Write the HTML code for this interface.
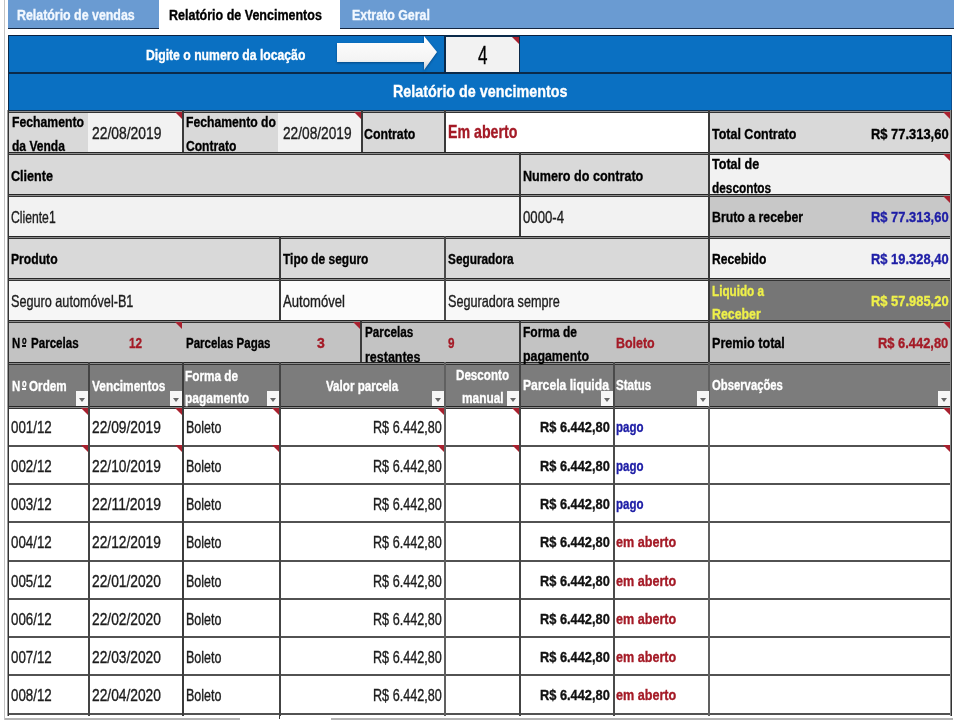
<!DOCTYPE html>
<html><head><meta charset="utf-8"><style>
html,body{margin:0;padding:0;background:#fff;width:960px;height:720px;overflow:hidden;position:relative}
body>div,body>svg{position:absolute}
.t{font-family:"Liberation Sans",sans-serif;line-height:1;white-space:nowrap;transform-origin:0 0;-webkit-text-stroke:0.35px currentColor}
</style></head><body>
<div style="left:4px;top:0px;width:1px;height:720px;background:#c4c4c4;"></div>
<div style="left:8px;top:0px;width:946px;height:28px;background:#6a9bd2;"></div>
<div style="left:8px;top:28px;width:946px;height:1px;background:#142640;"></div>
<div style="left:159px;top:0px;width:181px;height:29px;background:#ffffff;"></div>
<div class="t" style="left:17.00px;top:7.28px;font-size:15.26px;font-weight:bold;color:#f2f8ff;transform:scaleX(0.8122)">Relatório de vendas</div>
<div class="t" style="left:169.40px;top:7.38px;font-size:15.26px;font-weight:bold;color:#000;transform:scaleX(0.8200)">Relatório de Vencimentos</div>
<div class="t" style="left:351.60px;top:7.38px;font-size:15.26px;font-weight:bold;color:#f2f8ff;transform:scaleX(0.8138)">Extrato Geral</div>
<div style="left:8px;top:35px;width:944px;height:75px;background:#0a70c2;"></div>
<div style="left:8px;top:35px;width:944px;height:1px;background:#0b2140;"></div>
<div style="left:8px;top:72px;width:944px;height:2px;background:#0b2a4a;"></div>
<div style="left:951px;top:35px;width:1px;height:75px;background:#0c4f8f;"></div>
<div class="t" style="left:145.60px;top:46.53px;font-size:15.55px;font-weight:bold;color:#fff;transform:scaleX(0.7849)">Digite o numero da locação</div>
<svg style="position:absolute;left:330px;top:30px" width="120" height="50" viewBox="330 30 120 50"><defs><linearGradient id="ag" x1="0" y1="0" x2="0" y2="1"><stop offset="0" stop-color="#ffffff"/><stop offset="0.7" stop-color="#f4f4f4"/><stop offset="1" stop-color="#c8ccd4"/></linearGradient></defs><path d="M337 43 L424 43 L424 36 L437 52 L424 70 L424 62 L337 62 Z" fill="url(#ag)" style="filter:drop-shadow(0 1.5px 1px rgba(0,20,50,0.45))"/></svg>
<div style="left:444px;top:35px;width:76px;height:39px;background:#0b2a4a;"></div>
<div style="left:446px;top:37px;width:73px;height:35px;background:#f2f2f2;"></div>
<div class="t" style="left:477.50px;top:42.98px;font-size:25.29px;font-weight:normal;color:#000;transform:scaleX(0.6756)">4</div>
<div style="left:512px;top:37px;width:0;height:0;border-top:7px solid #a8202e;border-left:7px solid transparent;background:transparent"></div>
<div class="t" style="left:392.90px;top:83.25px;font-size:17.30px;font-weight:bold;color:#fff;transform:scaleX(0.8295)">Relatório de vencimentos</div>
<div style="left:8px;top:113px;width:80px;height:39px;background:#d9d9d9;"></div>
<div style="left:88px;top:113px;width:94px;height:39px;background:#f2f2f2;"></div>
<div style="left:182px;top:113px;width:96px;height:39px;background:#d9d9d9;"></div>
<div style="left:278px;top:113px;width:83px;height:39px;background:#f2f2f2;"></div>
<div style="left:361px;top:113px;width:83px;height:39px;background:#d9d9d9;"></div>
<div style="left:444px;top:113px;width:265px;height:39px;background:#ffffff;"></div>
<div style="left:709px;top:113px;width:243px;height:39px;background:#d9d9d9;"></div>
<div style="left:8px;top:152px;width:511px;height:42px;background:#d9d9d9;"></div>
<div style="left:519px;top:152px;width:190px;height:42px;background:#d9d9d9;"></div>
<div style="left:709px;top:152px;width:243px;height:42px;background:#f2f2f2;"></div>
<div style="left:8px;top:194px;width:511px;height:42px;background:#f2f2f2;"></div>
<div style="left:519px;top:194px;width:190px;height:42px;background:#f2f2f2;"></div>
<div style="left:709px;top:194px;width:243px;height:42px;background:#c8c8c8;"></div>
<div style="left:8px;top:236px;width:271px;height:42px;background:#d9d9d9;"></div>
<div style="left:279px;top:236px;width:165px;height:42px;background:#d9d9d9;"></div>
<div style="left:444px;top:236px;width:265px;height:42px;background:#d9d9d9;"></div>
<div style="left:709px;top:236px;width:243px;height:42px;background:#f2f2f2;"></div>
<div style="left:8px;top:278px;width:271px;height:42px;background:#f6f6f6;"></div>
<div style="left:279px;top:278px;width:165px;height:42px;background:#fbfbfb;"></div>
<div style="left:444px;top:278px;width:265px;height:42px;background:#f8f8f8;"></div>
<div style="left:709px;top:278px;width:243px;height:42px;background:#767676;"></div>
<div style="left:8px;top:320px;width:944px;height:42px;background:#c3c3c3;"></div>
<div style="left:8px;top:362px;width:944px;height:44px;background:#7c7c7c;"></div>
<div style="left:8px;top:406px;width:944px;height:310px;background:#ffffff;"></div>
<div style="left:8px;top:152px;width:944px;height:1px;background:#262626;"></div>
<div style="left:8px;top:153px;width:944px;height:1px;background:#8c8c8c;"></div>
<div style="left:8px;top:154px;width:944px;height:1px;background:#333333;"></div>
<div style="left:8px;top:194px;width:944px;height:1px;background:#262626;"></div>
<div style="left:8px;top:195px;width:944px;height:1px;background:#8c8c8c;"></div>
<div style="left:8px;top:196px;width:944px;height:1px;background:#333333;"></div>
<div style="left:8px;top:236px;width:944px;height:1px;background:#262626;"></div>
<div style="left:8px;top:237px;width:944px;height:1px;background:#8c8c8c;"></div>
<div style="left:8px;top:238px;width:944px;height:1px;background:#333333;"></div>
<div style="left:8px;top:278px;width:944px;height:1px;background:#262626;"></div>
<div style="left:8px;top:279px;width:944px;height:1px;background:#8c8c8c;"></div>
<div style="left:8px;top:280px;width:944px;height:1px;background:#333333;"></div>
<div style="left:8px;top:320px;width:944px;height:1px;background:#262626;"></div>
<div style="left:8px;top:321px;width:944px;height:1px;background:#8c8c8c;"></div>
<div style="left:8px;top:322px;width:944px;height:1px;background:#333333;"></div>
<div style="left:8px;top:362px;width:944px;height:1px;background:#262626;"></div>
<div style="left:8px;top:363px;width:944px;height:1px;background:#8c8c8c;"></div>
<div style="left:8px;top:364px;width:944px;height:1px;background:#333333;"></div>
<div style="left:8px;top:406px;width:944px;height:1px;background:#262626;"></div>
<div style="left:8px;top:407px;width:944px;height:1px;background:#8c8c8c;"></div>
<div style="left:8px;top:408px;width:944px;height:1px;background:#333333;"></div>
<div style="left:8px;top:110px;width:944px;height:1px;background:#0b2a4a;"></div>
<div style="left:8px;top:111px;width:944px;height:1px;background:#8c8c8c;"></div>
<div style="left:8px;top:112px;width:944px;height:1px;background:#333333;"></div>
<div style="left:8px;top:445px;width:944px;height:2px;background:#525252;"></div>
<div style="left:8px;top:483px;width:944px;height:2px;background:#525252;"></div>
<div style="left:8px;top:521px;width:944px;height:2px;background:#525252;"></div>
<div style="left:8px;top:560px;width:944px;height:2px;background:#525252;"></div>
<div style="left:8px;top:598px;width:944px;height:2px;background:#525252;"></div>
<div style="left:8px;top:636px;width:944px;height:2px;background:#525252;"></div>
<div style="left:8px;top:674px;width:944px;height:2px;background:#525252;"></div>
<div style="left:8px;top:713px;width:944px;height:2px;background:#525252;"></div>
<div style="left:8px;top:35px;width:1px;height:75px;background:#0b2a4a;"></div>
<div style="left:7px;top:110px;width:1px;height:606px;background:#9a9a9a;"></div>
<div style="left:8px;top:110px;width:1px;height:606px;background:#333333;"></div>
<div style="left:951px;top:110px;width:1px;height:606px;background:#333333;"></div>
<div style="left:950px;top:110px;width:1px;height:606px;background:#8a8a8a;"></div>
<div style="left:182px;top:110px;width:2px;height:42px;background:#3a3a3a;"></div>
<div style="left:361px;top:110px;width:2px;height:42px;background:#3a3a3a;"></div>
<div style="left:444px;top:110px;width:2px;height:42px;background:#3a3a3a;"></div>
<div style="left:708px;top:110px;width:2px;height:42px;background:#3a3a3a;"></div>
<div style="left:519px;top:152px;width:2px;height:84px;background:#3a3a3a;"></div>
<div style="left:708px;top:152px;width:2px;height:84px;background:#3a3a3a;"></div>
<div style="left:279px;top:236px;width:2px;height:84px;background:#3a3a3a;"></div>
<div style="left:444px;top:236px;width:2px;height:84px;background:#4a4a4a;"></div>
<div style="left:708px;top:236px;width:2px;height:84px;background:#3a3a3a;"></div>
<div style="left:360px;top:320px;width:2px;height:42px;background:#3a3a3a;"></div>
<div style="left:519px;top:320px;width:2px;height:42px;background:#3a3a3a;"></div>
<div style="left:708px;top:320px;width:2px;height:42px;background:#3a3a3a;"></div>
<div style="left:88px;top:362px;width:2px;height:354px;background:#444;"></div>
<div style="left:182px;top:362px;width:2px;height:354px;background:#3c3c3c;"></div>
<div style="left:279px;top:362px;width:2px;height:354px;background:#444;"></div>
<div style="left:444px;top:362px;width:2px;height:354px;background:#606060;"></div>
<div style="left:519px;top:362px;width:2px;height:354px;background:#444;"></div>
<div style="left:613px;top:362px;width:2px;height:354px;background:#4a4a4a;"></div>
<div style="left:708px;top:362px;width:2px;height:354px;background:#606060;"></div>
<div style="left:279px;top:716px;width:1px;height:3px;background:#3a3a3a;"></div>
<div style="left:5px;top:718px;width:235px;height:2px;background:#b4b4b4;"></div>
<div style="left:331px;top:718px;width:622px;height:2px;background:#b4b4b4;"></div>
<div style="left:175px;top:112px;width:0;height:0;border-top:7px solid #a8202e;border-left:7px solid transparent;background:transparent"></div>
<div style="left:354px;top:112px;width:0;height:0;border-top:7px solid #a8202e;border-left:7px solid transparent;background:transparent"></div>
<div style="left:943px;top:112px;width:0;height:0;border-top:7px solid #a8202e;border-left:7px solid transparent;background:transparent"></div>
<div style="left:943px;top:154px;width:0;height:0;border-top:7px solid #a8202e;border-left:7px solid transparent;background:transparent"></div>
<div style="left:943px;top:196px;width:0;height:0;border-top:7px solid #a8202e;border-left:7px solid transparent;background:transparent"></div>
<div style="left:175px;top:322px;width:0;height:0;border-top:7px solid #a8202e;border-left:7px solid transparent;background:transparent"></div>
<div style="left:353px;top:322px;width:0;height:0;border-top:7px solid #a8202e;border-left:7px solid transparent;background:transparent"></div>
<div style="left:943px;top:322px;width:0;height:0;border-top:7px solid #a8202e;border-left:7px solid transparent;background:transparent"></div>
<div style="left:81px;top:408px;width:0;height:0;border-top:7px solid #a8202e;border-left:7px solid transparent;background:transparent"></div>
<div style="left:175px;top:408px;width:0;height:0;border-top:7px solid #a8202e;border-left:7px solid transparent;background:transparent"></div>
<div style="left:272px;top:408px;width:0;height:0;border-top:7px solid #a8202e;border-left:7px solid transparent;background:transparent"></div>
<div style="left:437px;top:408px;width:0;height:0;border-top:7px solid #a8202e;border-left:7px solid transparent;background:transparent"></div>
<div style="left:512px;top:408px;width:0;height:0;border-top:7px solid #a8202e;border-left:7px solid transparent;background:transparent"></div>
<div style="left:943px;top:408px;width:0;height:0;border-top:7px solid #a8202e;border-left:7px solid transparent;background:transparent"></div>
<div style="left:81px;top:445px;width:0;height:0;border-top:7px solid #a8202e;border-left:7px solid transparent;background:transparent"></div>
<div style="left:175px;top:445px;width:0;height:0;border-top:7px solid #a8202e;border-left:7px solid transparent;background:transparent"></div>
<div style="left:272px;top:445px;width:0;height:0;border-top:7px solid #a8202e;border-left:7px solid transparent;background:transparent"></div>
<div style="left:437px;top:445px;width:0;height:0;border-top:7px solid #a8202e;border-left:7px solid transparent;background:transparent"></div>
<div style="left:512px;top:445px;width:0;height:0;border-top:7px solid #a8202e;border-left:7px solid transparent;background:transparent"></div>
<div style="left:943px;top:445px;width:0;height:0;border-top:7px solid #a8202e;border-left:7px solid transparent;background:transparent"></div>
<div class="t" style="left:11.60px;top:113.93px;font-size:15.55px;font-weight:bold;color:#000;transform:scaleX(0.7860)">Fechamento</div>
<div class="t" style="left:11.60px;top:138.23px;font-size:15.55px;font-weight:bold;color:#000;transform:scaleX(0.7749)">da Venda</div>
<div class="t" style="left:92.00px;top:125.21px;font-size:16.28px;font-weight:normal;color:#1c1c1c;transform:scaleX(0.8530)">22/08/2019</div>
<div class="t" style="left:185.60px;top:114.03px;font-size:15.55px;font-weight:bold;color:#000;transform:scaleX(0.7831)">Fechamento do</div>
<div class="t" style="left:185.60px;top:138.13px;font-size:15.55px;font-weight:bold;color:#000;transform:scaleX(0.7779)">Contrato</div>
<div class="t" style="left:283.00px;top:125.21px;font-size:16.28px;font-weight:normal;color:#1c1c1c;transform:scaleX(0.8420)">22/08/2019</div>
<div class="t" style="left:364.40px;top:125.53px;font-size:15.55px;font-weight:bold;color:#000;transform:scaleX(0.7918)">Contrato</div>
<div class="t" style="left:448.40px;top:122.95px;font-size:18.60px;font-weight:bold;color:#a41a26;transform:scaleX(0.7628)">Em aberto</div>
<div class="t" style="left:712.30px;top:125.63px;font-size:15.55px;font-weight:bold;color:#000;transform:scaleX(0.8030)">Total Contrato</div>
<div class="t" style="left:870.90px;top:125.63px;font-size:15.55px;font-weight:bold;color:#000;transform:scaleX(0.8309)">R$ 77.313,60</div>
<div class="t" style="left:11.10px;top:167.63px;font-size:15.55px;font-weight:bold;color:#000;transform:scaleX(0.8100)">Cliente</div>
<div class="t" style="left:522.70px;top:167.53px;font-size:15.55px;font-weight:bold;color:#000;transform:scaleX(0.8095)">Numero do contrato</div>
<div class="t" style="left:711.80px;top:156.03px;font-size:15.55px;font-weight:bold;color:#000;transform:scaleX(0.8074)">Total de</div>
<div class="t" style="left:711.80px;top:179.63px;font-size:15.55px;font-weight:bold;color:#000;transform:scaleX(0.7611)">descontos</div>
<div class="t" style="left:11.40px;top:209.21px;font-size:16.28px;font-weight:normal;color:#1c1c1c;transform:scaleX(0.7484)">Cliente1</div>
<div class="t" style="left:522.70px;top:209.21px;font-size:16.28px;font-weight:normal;color:#1c1c1c;transform:scaleX(0.8108)">0000-4</div>
<div class="t" style="left:712.30px;top:209.13px;font-size:15.55px;font-weight:bold;color:#000;transform:scaleX(0.7924)">Bruto a receber</div>
<div class="t" style="left:870.90px;top:209.13px;font-size:15.55px;font-weight:bold;color:#1e1ea6;transform:scaleX(0.8309)">R$ 77.313,60</div>
<div class="t" style="left:11.40px;top:251.13px;font-size:15.55px;font-weight:bold;color:#000;transform:scaleX(0.7817)">Produto</div>
<div class="t" style="left:282.80px;top:250.93px;font-size:15.55px;font-weight:bold;color:#000;transform:scaleX(0.7681)">Tipo de seguro</div>
<div class="t" style="left:448.20px;top:250.93px;font-size:15.55px;font-weight:bold;color:#000;transform:scaleX(0.7604)">Seguradora</div>
<div class="t" style="left:712.30px;top:250.83px;font-size:15.55px;font-weight:bold;color:#000;transform:scaleX(0.7771)">Recebido</div>
<div class="t" style="left:870.90px;top:250.83px;font-size:15.55px;font-weight:bold;color:#1e1ea6;transform:scaleX(0.8309)">R$ 19.328,40</div>
<div class="t" style="left:11.40px;top:293.01px;font-size:16.28px;font-weight:normal;color:#1c1c1c;transform:scaleX(0.7780)">Seguro automóvel-B1</div>
<div class="t" style="left:282.80px;top:293.01px;font-size:16.28px;font-weight:normal;color:#1c1c1c;transform:scaleX(0.8060)">Automóvel</div>
<div class="t" style="left:448.00px;top:292.91px;font-size:16.28px;font-weight:normal;color:#1c1c1c;transform:scaleX(0.7771)">Seguradora sempre</div>
<div class="t" style="left:712.30px;top:282.53px;font-size:15.55px;font-weight:bold;color:#eef04a;transform:scaleX(0.7526)">Liquido a</div>
<div class="t" style="left:712.30px;top:306.03px;font-size:15.55px;font-weight:bold;color:#eef04a;transform:scaleX(0.7934)">Receber</div>
<div class="t" style="left:870.90px;top:293.43px;font-size:15.55px;font-weight:bold;color:#eef04a;transform:scaleX(0.8309)">R$ 57.985,20</div>
<div class="t" style="left:11.75px;top:335.33px;font-size:15.55px;font-weight:bold;color:#000;transform:scaleX(0.7347)">N</div>
<div class="t" style="left:21.50px;top:335.49px;font-size:10.76px;font-weight:bold;color:#000;transform:scaleX(0.7000)">o</div>
<div style="left:21.5px;top:345.3px;width:4.5px;height:1.3999999999999773px;background:#111111;"></div>
<div class="t" style="left:30.50px;top:335.13px;font-size:15.55px;font-weight:bold;color:#000;transform:scaleX(0.7438)">Parcelas</div>
<div class="t" style="left:128.90px;top:335.03px;font-size:15.55px;font-weight:bold;color:#a41a26;transform:scaleX(0.7575)">12</div>
<div class="t" style="left:185.80px;top:335.03px;font-size:15.55px;font-weight:bold;color:#000;transform:scaleX(0.7403)">Parcelas Pagas</div>
<div class="t" style="left:316.70px;top:335.33px;font-size:15.55px;font-weight:bold;color:#a41a26;transform:scaleX(0.9020)">3</div>
<div class="t" style="left:364.80px;top:324.03px;font-size:15.55px;font-weight:bold;color:#000;transform:scaleX(0.7532)">Parcelas</div>
<div class="t" style="left:364.80px;top:348.53px;font-size:15.55px;font-weight:bold;color:#000;transform:scaleX(0.8025)">restantes</div>
<div class="t" style="left:448.20px;top:335.33px;font-size:15.55px;font-weight:bold;color:#a41a26;transform:scaleX(0.7517)">9</div>
<div class="t" style="left:523.00px;top:323.53px;font-size:15.55px;font-weight:bold;color:#000;transform:scaleX(0.7714)">Forma de</div>
<div class="t" style="left:523.00px;top:347.73px;font-size:15.55px;font-weight:bold;color:#000;transform:scaleX(0.7956)">pagamento</div>
<div class="t" style="left:616.20px;top:335.03px;font-size:15.55px;font-weight:bold;color:#a41a26;transform:scaleX(0.7999)">Boleto</div>
<div class="t" style="left:712.30px;top:335.13px;font-size:15.55px;font-weight:bold;color:#000;transform:scaleX(0.8111)">Premio total</div>
<div class="t" style="left:878.20px;top:335.13px;font-size:15.55px;font-weight:bold;color:#a41a26;transform:scaleX(0.8296)">R$ 6.442,80</div>
<div class="t" style="left:11.75px;top:378.33px;font-size:15.55px;font-weight:bold;color:#ffffff;transform:scaleX(0.7347)">N</div>
<div class="t" style="left:21.50px;top:378.49px;font-size:10.76px;font-weight:bold;color:#ffffff;transform:scaleX(0.7000)">o</div>
<div style="left:21.5px;top:388.3px;width:4.5px;height:1.3999999999999773px;background:#ffffff;"></div>
<div class="t" style="left:29.30px;top:378.33px;font-size:15.55px;font-weight:bold;color:#ffffff;transform:scaleX(0.7521)">Ordem</div>
<div class="t" style="left:91.90px;top:378.33px;font-size:15.55px;font-weight:bold;color:#ffffff;transform:scaleX(0.7650)">Vencimentos</div>
<div class="t" style="left:185.20px;top:367.83px;font-size:15.55px;font-weight:bold;color:#ffffff;transform:scaleX(0.7571)">Forma de</div>
<div class="t" style="left:185.20px;top:389.83px;font-size:15.55px;font-weight:bold;color:#ffffff;transform:scaleX(0.7715)">pagamento</div>
<div class="t" style="left:325.80px;top:377.53px;font-size:15.55px;font-weight:bold;color:#ffffff;transform:scaleX(0.7469)">Valor parcela</div>
<div class="t" style="left:456.00px;top:367.13px;font-size:15.55px;font-weight:bold;color:#ffffff;transform:scaleX(0.7480)">Desconto</div>
<div class="t" style="left:462.00px;top:389.83px;font-size:15.55px;font-weight:bold;color:#ffffff;transform:scaleX(0.7640)">manual</div>
<div class="t" style="left:523.10px;top:377.43px;font-size:15.55px;font-weight:bold;color:#ffffff;transform:scaleX(0.7827)">Parcela liquida</div>
<div class="t" style="left:615.50px;top:377.43px;font-size:15.55px;font-weight:bold;color:#ffffff;transform:scaleX(0.7427)">Status</div>
<div class="t" style="left:711.70px;top:377.43px;font-size:15.55px;font-weight:bold;color:#ffffff;transform:scaleX(0.7257)">Observações</div>
<div style="left:76px;top:391px;width:12px;height:15px;background:#f6f6f6"></div>
<div style="left:79px;top:398px;width:0;height:0;border-top:4px solid #666;border-left:3px solid transparent;border-right:3px solid transparent;background:transparent"></div>
<div style="left:170px;top:391px;width:12px;height:15px;background:#f6f6f6"></div>
<div style="left:173px;top:398px;width:0;height:0;border-top:4px solid #666;border-left:3px solid transparent;border-right:3px solid transparent;background:transparent"></div>
<div style="left:267px;top:391px;width:12px;height:15px;background:#f6f6f6"></div>
<div style="left:270px;top:398px;width:0;height:0;border-top:4px solid #666;border-left:3px solid transparent;border-right:3px solid transparent;background:transparent"></div>
<div style="left:432px;top:391px;width:12px;height:15px;background:#f6f6f6"></div>
<div style="left:435px;top:398px;width:0;height:0;border-top:4px solid #666;border-left:3px solid transparent;border-right:3px solid transparent;background:transparent"></div>
<div style="left:507px;top:391px;width:12px;height:15px;background:#f6f6f6"></div>
<div style="left:510px;top:398px;width:0;height:0;border-top:4px solid #666;border-left:3px solid transparent;border-right:3px solid transparent;background:transparent"></div>
<div style="left:601px;top:391px;width:12px;height:15px;background:#f6f6f6"></div>
<div style="left:604px;top:398px;width:0;height:0;border-top:4px solid #666;border-left:3px solid transparent;border-right:3px solid transparent;background:transparent"></div>
<div style="left:697px;top:391px;width:12px;height:15px;background:#f6f6f6"></div>
<div style="left:700px;top:398px;width:0;height:0;border-top:4px solid #666;border-left:3px solid transparent;border-right:3px solid transparent;background:transparent"></div>
<div style="left:938px;top:391px;width:12px;height:15px;background:#f6f6f6"></div>
<div style="left:941px;top:398px;width:0;height:0;border-top:4px solid #666;border-left:3px solid transparent;border-right:3px solid transparent;background:transparent"></div>
<div class="t" style="left:11.40px;top:418.71px;font-size:16.28px;font-weight:normal;color:#1c1c1c;transform:scaleX(0.8193)">001/12</div>
<div class="t" style="left:91.90px;top:418.71px;font-size:16.28px;font-weight:normal;color:#1c1c1c;transform:scaleX(0.8469)">22/09/2019</div>
<div class="t" style="left:185.80px;top:418.71px;font-size:16.28px;font-weight:normal;color:#1c1c1c;transform:scaleX(0.7692)">Boleto</div>
<div class="t" style="left:373.00px;top:418.71px;font-size:16.28px;font-weight:normal;color:#1c1c1c;transform:scaleX(0.7756)">R$ 6.442,80</div>
<div class="t" style="left:540.40px;top:419.33px;font-size:15.55px;font-weight:bold;color:#111111;transform:scaleX(0.8237)">R$ 6.442,80</div>
<div class="t" style="left:616.00px;top:419.33px;font-size:15.55px;font-weight:bold;color:#1e1ea6;transform:scaleX(0.7402)">pago</div>
<div class="t" style="left:11.40px;top:457.71px;font-size:16.28px;font-weight:normal;color:#1c1c1c;transform:scaleX(0.8193)">002/12</div>
<div class="t" style="left:91.90px;top:457.71px;font-size:16.28px;font-weight:normal;color:#1c1c1c;transform:scaleX(0.8469)">22/10/2019</div>
<div class="t" style="left:185.80px;top:457.71px;font-size:16.28px;font-weight:normal;color:#1c1c1c;transform:scaleX(0.7692)">Boleto</div>
<div class="t" style="left:373.00px;top:457.71px;font-size:16.28px;font-weight:normal;color:#1c1c1c;transform:scaleX(0.7756)">R$ 6.442,80</div>
<div class="t" style="left:540.40px;top:458.33px;font-size:15.55px;font-weight:bold;color:#111111;transform:scaleX(0.8237)">R$ 6.442,80</div>
<div class="t" style="left:616.00px;top:458.33px;font-size:15.55px;font-weight:bold;color:#1e1ea6;transform:scaleX(0.7402)">pago</div>
<div class="t" style="left:11.40px;top:495.71px;font-size:16.28px;font-weight:normal;color:#1c1c1c;transform:scaleX(0.8193)">003/12</div>
<div class="t" style="left:91.90px;top:495.71px;font-size:16.28px;font-weight:normal;color:#1c1c1c;transform:scaleX(0.8596)">22/11/2019</div>
<div class="t" style="left:185.80px;top:495.71px;font-size:16.28px;font-weight:normal;color:#1c1c1c;transform:scaleX(0.7692)">Boleto</div>
<div class="t" style="left:373.00px;top:495.71px;font-size:16.28px;font-weight:normal;color:#1c1c1c;transform:scaleX(0.7756)">R$ 6.442,80</div>
<div class="t" style="left:540.40px;top:496.33px;font-size:15.55px;font-weight:bold;color:#111111;transform:scaleX(0.8237)">R$ 6.442,80</div>
<div class="t" style="left:616.00px;top:496.33px;font-size:15.55px;font-weight:bold;color:#1e1ea6;transform:scaleX(0.7402)">pago</div>
<div class="t" style="left:11.40px;top:533.71px;font-size:16.28px;font-weight:normal;color:#1c1c1c;transform:scaleX(0.8193)">004/12</div>
<div class="t" style="left:91.90px;top:533.71px;font-size:16.28px;font-weight:normal;color:#1c1c1c;transform:scaleX(0.8469)">22/12/2019</div>
<div class="t" style="left:185.80px;top:533.71px;font-size:16.28px;font-weight:normal;color:#1c1c1c;transform:scaleX(0.7692)">Boleto</div>
<div class="t" style="left:373.00px;top:533.71px;font-size:16.28px;font-weight:normal;color:#1c1c1c;transform:scaleX(0.7756)">R$ 6.442,80</div>
<div class="t" style="left:540.40px;top:534.33px;font-size:15.55px;font-weight:bold;color:#111111;transform:scaleX(0.8237)">R$ 6.442,80</div>
<div class="t" style="left:616.25px;top:534.33px;font-size:15.55px;font-weight:bold;color:#a41a26;transform:scaleX(0.8106)">em aberto</div>
<div class="t" style="left:11.40px;top:572.71px;font-size:16.28px;font-weight:normal;color:#1c1c1c;transform:scaleX(0.8193)">005/12</div>
<div class="t" style="left:91.90px;top:572.71px;font-size:16.28px;font-weight:normal;color:#1c1c1c;transform:scaleX(0.8469)">22/01/2020</div>
<div class="t" style="left:185.80px;top:572.71px;font-size:16.28px;font-weight:normal;color:#1c1c1c;transform:scaleX(0.7692)">Boleto</div>
<div class="t" style="left:373.00px;top:572.71px;font-size:16.28px;font-weight:normal;color:#1c1c1c;transform:scaleX(0.7756)">R$ 6.442,80</div>
<div class="t" style="left:540.40px;top:573.33px;font-size:15.55px;font-weight:bold;color:#111111;transform:scaleX(0.8237)">R$ 6.442,80</div>
<div class="t" style="left:616.25px;top:573.33px;font-size:15.55px;font-weight:bold;color:#a41a26;transform:scaleX(0.8106)">em aberto</div>
<div class="t" style="left:11.40px;top:610.71px;font-size:16.28px;font-weight:normal;color:#1c1c1c;transform:scaleX(0.8193)">006/12</div>
<div class="t" style="left:91.90px;top:610.71px;font-size:16.28px;font-weight:normal;color:#1c1c1c;transform:scaleX(0.8469)">22/02/2020</div>
<div class="t" style="left:185.80px;top:610.71px;font-size:16.28px;font-weight:normal;color:#1c1c1c;transform:scaleX(0.7692)">Boleto</div>
<div class="t" style="left:373.00px;top:610.71px;font-size:16.28px;font-weight:normal;color:#1c1c1c;transform:scaleX(0.7756)">R$ 6.442,80</div>
<div class="t" style="left:540.40px;top:611.33px;font-size:15.55px;font-weight:bold;color:#111111;transform:scaleX(0.8237)">R$ 6.442,80</div>
<div class="t" style="left:616.25px;top:611.33px;font-size:15.55px;font-weight:bold;color:#a41a26;transform:scaleX(0.8106)">em aberto</div>
<div class="t" style="left:11.40px;top:648.71px;font-size:16.28px;font-weight:normal;color:#1c1c1c;transform:scaleX(0.8193)">007/12</div>
<div class="t" style="left:91.90px;top:648.71px;font-size:16.28px;font-weight:normal;color:#1c1c1c;transform:scaleX(0.8469)">22/03/2020</div>
<div class="t" style="left:185.80px;top:648.71px;font-size:16.28px;font-weight:normal;color:#1c1c1c;transform:scaleX(0.7692)">Boleto</div>
<div class="t" style="left:373.00px;top:648.71px;font-size:16.28px;font-weight:normal;color:#1c1c1c;transform:scaleX(0.7756)">R$ 6.442,80</div>
<div class="t" style="left:540.40px;top:649.33px;font-size:15.55px;font-weight:bold;color:#111111;transform:scaleX(0.8237)">R$ 6.442,80</div>
<div class="t" style="left:616.25px;top:649.33px;font-size:15.55px;font-weight:bold;color:#a41a26;transform:scaleX(0.8106)">em aberto</div>
<div class="t" style="left:11.40px;top:686.71px;font-size:16.28px;font-weight:normal;color:#1c1c1c;transform:scaleX(0.8193)">008/12</div>
<div class="t" style="left:91.90px;top:686.71px;font-size:16.28px;font-weight:normal;color:#1c1c1c;transform:scaleX(0.8469)">22/04/2020</div>
<div class="t" style="left:185.80px;top:686.71px;font-size:16.28px;font-weight:normal;color:#1c1c1c;transform:scaleX(0.7692)">Boleto</div>
<div class="t" style="left:373.00px;top:686.71px;font-size:16.28px;font-weight:normal;color:#1c1c1c;transform:scaleX(0.7756)">R$ 6.442,80</div>
<div class="t" style="left:540.40px;top:687.33px;font-size:15.55px;font-weight:bold;color:#111111;transform:scaleX(0.8237)">R$ 6.442,80</div>
<div class="t" style="left:616.25px;top:687.33px;font-size:15.55px;font-weight:bold;color:#a41a26;transform:scaleX(0.8106)">em aberto</div>
</body></html>
